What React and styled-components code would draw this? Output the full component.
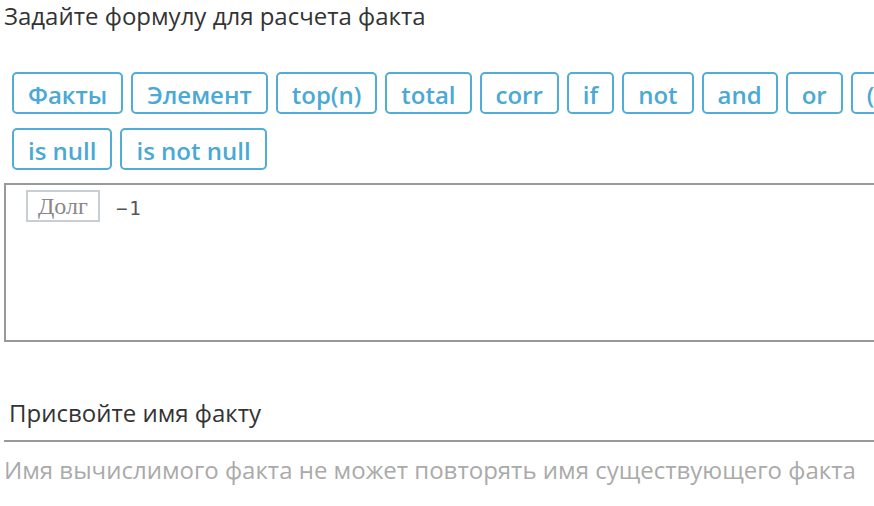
import React from "react";
import styled, { createGlobalStyle } from "styled-components";

const GlobalStyle = createGlobalStyle`
  html, body {
    margin: 0;
    padding: 0;
    background: #fff;
    overflow: hidden;
  }
  body {
    font-family: "Open Sans", "Liberation Sans", sans-serif;
  }
`;

const Page = styled.div`
  width: 1040px;
  padding: 0 0 0 4px;
  display: flex;
  flex-direction: column;
`;

const Heading = styled.div`
  font-size: 24px;
  line-height: 32px;
  color: #333;
`;

const Toolbar = styled.div`
  display: flex;
  flex-wrap: wrap;
  gap: 14px 8px;
  width: 1000px;
  padding: 40px 0 0 8px;
`;

const OpButton = styled.button`
  box-sizing: border-box;
  height: 42px;
  padding: 3px 14px 0;
  border: 2px solid #4fadd7;
  border-radius: 5px;
  background: #fff;
  color: #4aa9d5;
  font-family: "Open Sans", "Liberation Sans", sans-serif;
  font-weight: 600;
  font-size: 24px;
  line-height: 35px;
  cursor: pointer;
`;

const Editor = styled.div`
  box-sizing: border-box;
  margin-top: 13px;
  height: 159px;
  border: 2px solid #999;
  padding: 5px 20px;
  display: flex;
  align-items: flex-start;
  gap: 16px;
`;

const FactTag = styled.span`
  box-sizing: border-box;
  height: 32px;
  padding: 1px 10px 0;
  border: 2px solid #c9cdd6;
  font-family: "Liberation Serif", "Times New Roman", serif;
  font-size: 24px;
  line-height: 27px;
  color: #888;
`;

const Expr = styled.span`
  padding-top: 3px;
  font-family: "DejaVu Sans Mono", "Liberation Mono", monospace;
  font-size: 19px;
  letter-spacing: 2px;
  line-height: 30px;
  color: #555;
`;

const NameField = styled.div`
  margin-top: 55px;
  padding: 0 5px 11px;
  border-bottom: 2px solid #999;
  font-size: 24px;
  line-height: 32px;
  color: #333;
`;

const Hint = styled.div`
  margin-top: 12px;
  font-size: 24px;
  line-height: 32px;
  color: #aaa;
`;

const ops = ["Факты", "Элемент", "top(n)", "total", "corr", "if", "not", "and", "or", "(", ")", "is null", "is not null"];

export default function App() {
  return (
    <>
      <GlobalStyle />
      <Page>
        <Heading>Задайте формулу для расчета факта</Heading>
        <Toolbar>
          {ops.map((op) => (
            <OpButton key={op}>{op}</OpButton>
          ))}
        </Toolbar>
        <Editor>
          <FactTag>Долг</FactTag>
          <Expr>−1</Expr>
        </Editor>
        <NameField>Присвойте имя факту</NameField>
        <Hint>Имя вычислимого факта не может повторять имя существующего факта</Hint>
      </Page>
    </>
  );
}
